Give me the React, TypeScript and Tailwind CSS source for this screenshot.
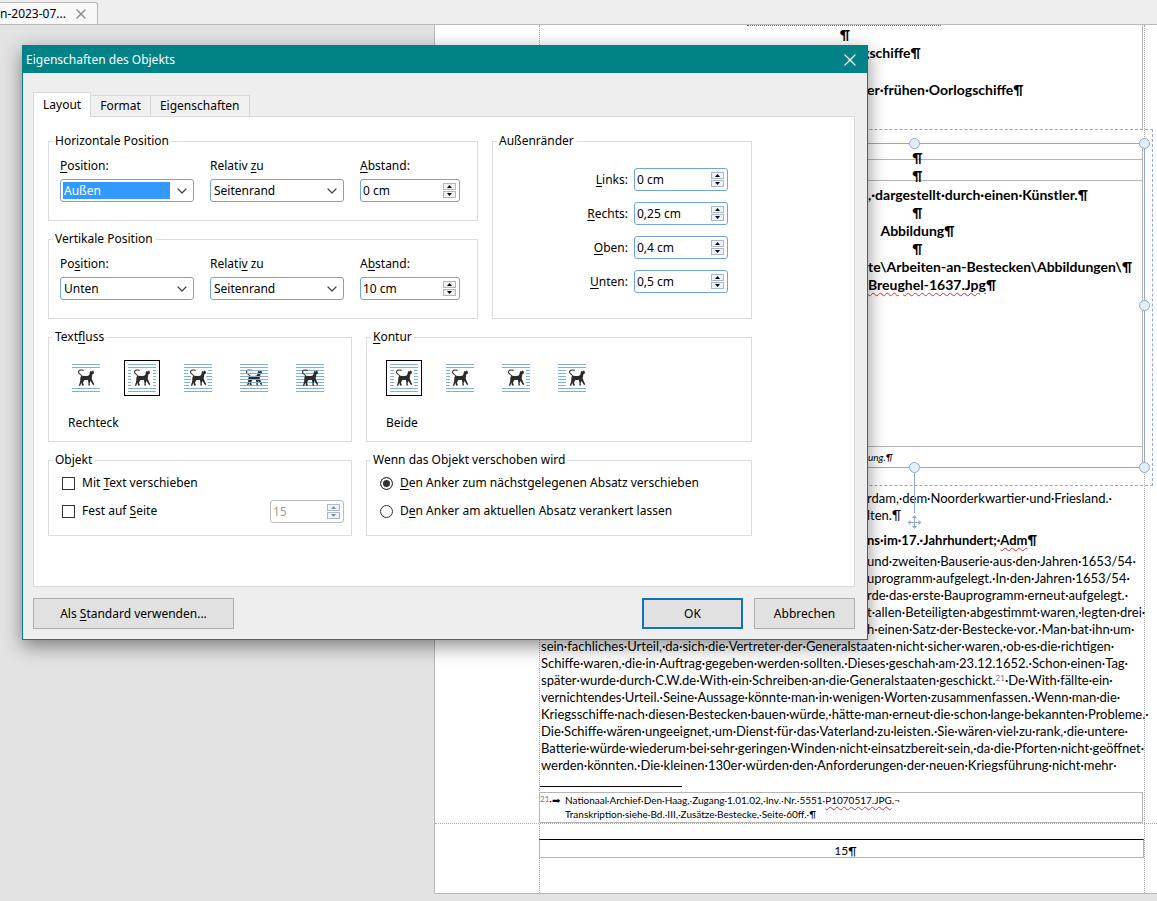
import React, { useState } from 'react';
import { ChevronDown, X } from 'lucide-react';

// "&" marks the letter that gets the keyboard underline
const Mnemonic = ({ text }: { text: string }) => {
  const at = text.indexOf('&');
  if (at < 0) return <>{text}</>;
  return (
    <span>
      {text.slice(0, at)}
      <span className="underline underline-offset-2">{text[at + 1]}</span>
      {text.slice(at + 2)}
    </span>
  );
};

interface GroupProps {
  title: string;
  className?: string;
  children: React.ReactNode;
}

const Group = ({ title, className = '', children }: GroupProps) => (
  <fieldset className={`min-w-0 border border-[#dcdcdc] ${className}`}>
    <legend className="ml-1 px-[2px] leading-[18px]">
      <Mnemonic text={title} />
    </legend>
    {children}
  </fieldset>
);

interface SelectBoxProps {
  id: string;
  label: string;
  options: string[];
  highlighted?: boolean;
}

const SelectBox = ({ id, label, options, highlighted }: SelectBoxProps) => (
  <div className="flex w-[134px] flex-col gap-1">
    <label htmlFor={id} className="leading-[18px]">
      <Mnemonic text={label} />
    </label>
    <div className="flex h-[23px] items-center rounded-[3px] border border-[#6ea6dc] bg-white p-[2px]">
      <select
        id={id}
        className={`h-[17px] min-w-0 flex-1 appearance-none pl-px leading-[17px] outline-none ${
          highlighted ? 'bg-[#3399ff] text-white' : 'bg-white text-black'
        }`}
      >
        {options.map((o) => (
          <option key={o}>{o}</option>
        ))}
      </select>
      <ChevronDown className="mr-px ml-1 size-4 shrink-0 text-[#444]" strokeWidth={1.8} />
    </div>
  </div>
);

interface SpinBoxProps {
  id: string;
  value: string;
  className: string;
  disabled?: boolean;
  ariaLabel?: string;
}

const SpinBox = ({ id, value, className, disabled, ariaLabel }: SpinBoxProps) => {
  const [text, setText] = useState(value);
  const border = disabled ? 'border-[#bcbcbc]' : 'border-[#6ea6dc]';
  const arrow = disabled ? 'fill-[#8a8a8a]' : 'fill-black';
  return (
    <div className={`flex h-[23px] items-center rounded-[3px] border bg-white pr-[3px] pl-[2px] ${border} ${className}`}>
      <input
        id={id}
        type="text"
        aria-label={ariaLabel}
        value={text}
        disabled={disabled}
        onChange={(e) => setText(e.target.value)}
        className="h-[19px] min-w-0 flex-1 bg-transparent outline-none disabled:text-[#a0a0a0]"
      />
      <div className="flex shrink-0 flex-col gap-px">
        <button type="button" disabled={disabled} aria-label="Mehr" className="flex h-[7px] w-[13px] items-center justify-center border border-[#a9b6d0] bg-[#f1f3f8]">
          <svg viewBox="0 0 5 3" className={`h-[3px] w-[5px] ${arrow}`}><path d="M2.5 0 5 3H0Z" /></svg>
        </button>
        <button type="button" disabled={disabled} aria-label="Weniger" className="flex h-[7px] w-[13px] items-center justify-center border border-[#a9b6d0] bg-[#f1f3f8]">
          <svg viewBox="0 0 5 3" className={`h-[3px] w-[5px] ${arrow}`}><path d="M2.5 3 5 0H0Z" /></svg>
        </button>
      </div>
    </div>
  );
};

type Stub = [number, number];

interface WrapIconProps {
  left?: Stub[];
  right?: Stub[];
  full?: boolean;
  through?: boolean;
  shift?: number;
}

const ROWS = [6.5, 9.5, 12.5, 15.5, 18.5, 21.5];

const Cat = ({ shift = 0 }: { shift?: number }) => (
  <g transform={`translate(${shift} 0)`}>
    <path d="M11.4 6.2C8.4 5.4 6 6.6 6.6 8.6 7 10 9.4 10.4 10 12.6" fill="none" stroke="#2b2b2b" strokeWidth="1.1" strokeLinecap="round" />
    <path
      d="M9.2 12C11 11.4 13.5 12.6 16 11.8 17.4 11.2 17.8 9.4 17.8 8L18.4 7 19.2 7.4 20.4 7.1 20.9 6 21.5 7.2 22 9 21.2 10 20.2 10.4C20.2 12 20 13.2 19.6 14.2L20.8 17.2 22.2 20.2 21.8 21 20.6 20.6 18.6 17 17.6 19 18 21.6 16.4 21.6 16.4 18.6 15.8 15.8C14.4 16.1 13 16 12.2 16.2L11 18.4 11.8 21 11.2 21.8 10 21.4 9.4 18.8 8.6 20.4 8.4 21.8 6.8 21.8 7.2 20.4 8.2 17.2C8.4 15 8 13.2 9.2 12Z"
      fill="#2b2b2b"
    />
  </g>
);

const WrapIcon = ({ left, right, full, through, shift }: WrapIconProps) => {
  const lines = (
    <g stroke="#7fb0d8" strokeWidth="1">
      {full && ROWS.map((y) => <path key={y} d={`M0 ${y}H28`} />)}
      {left?.map(([a, b], i) => <path key={`l${i}`} d={`M${a} ${ROWS[i]}H${b}`} />)}
      {right?.map(([a, b], i) => <path key={`r${i}`} d={`M${a} ${ROWS[i]}H${b}`} />)}
    </g>
  );
  return (
    <svg viewBox="0 0 28 28" className="size-7">
      <path d="M0 .5H28M0 3.5H28M0 24.5H28M0 27.5H28" stroke="#7fb0d8" strokeWidth="1" />
      {!through && lines}
      <Cat shift={shift} />
      {through && lines}
    </svg>
  );
};

const same = (a: number, b: number): Stub[] => ROWS.map(() => [a, b] as Stub);

const TEXT_FLOW: (WrapIconProps & { name: string })[] = [
  { name: 'Oben und unten' },
  { name: 'Rechteck', left: same(0, 3), right: same(25, 28) },
  {
    name: 'Kontur',
    left: [[0, 4], [0, 4], [0, 7], [0, 7], [0, 6], [0, 5]],
    right: [[24, 28], [23, 28], [22, 28], [23, 28], [24, 28], [24, 28]],
  },
  { name: 'Durchlauf', full: true, through: true },
  { name: 'Hintergrund', full: true },
];

const CONTOUR: (WrapIconProps & { name: string })[] = [
  { name: 'Beide', left: same(0, 4), right: same(24, 28) },
  { name: 'Links', left: same(0, 4) },
  { name: 'Rechts', right: same(24, 28) },
  { name: 'Größte Seite', left: same(0, 8), shift: 5 },
];

interface IconPickerProps {
  items: (WrapIconProps & { name: string })[];
  initial: number;
}

const IconPicker = ({ items, initial }: IconPickerProps) => {
  const [active, setActive] = useState(initial);
  return (
    <div className="pt-[14px] pb-[9px] pl-[19px]">
      <div className="flex gap-5">
        {items.map(({ name, ...icon }, i) => (
          <button
            key={name}
            type="button"
            aria-label={name}
            aria-pressed={i === active}
            onClick={() => setActive(i)}
            className={`flex size-9 items-center justify-center border ${i === active ? 'border-black' : 'border-transparent'}`}
          >
            <WrapIcon {...icon} />
          </button>
        ))}
      </div>
      <p className="mt-[18px] leading-[18px]">{items[active].name}</p>
    </div>
  );
};

const MARGINS = [
  { id: 'links', label: '&Links:', value: '0 cm' },
  { id: 'rechts', label: '&Rechts:', value: '0,25 cm' },
  { id: 'oben', label: '&Oben:', value: '0,4 cm' },
  { id: 'unten', label: '&Unten:', value: '0,5 cm' },
];

const LayoutPanel = () => (
  <div className="flex w-[704px] flex-col gap-[9px]">
    <div className="flex gap-[14px]">
      <div className="flex flex-1 flex-col gap-[9px]">
        <Group title="Horizontale Position">
          <div className="flex gap-4 pt-[7px] pb-[18px] pl-[11px]">
            <SelectBox id="h-pos" label="&Position:" options={['Außen', 'Innen', 'Links', 'Rechts']} highlighted />
            <SelectBox id="h-rel" label="Relativ &zu" options={['Seitenrand', 'Seite', 'Absatz']} />
            <div className="flex flex-col gap-1">
              <label htmlFor="h-dist" className="leading-[18px]"><Mnemonic text="&Abstand:" /></label>
              <SpinBox id="h-dist" value="0 cm" className="w-[100px]" />
            </div>
          </div>
        </Group>
        <Group title="Vertikale Position">
          <div className="flex gap-4 pt-[7px] pb-[18px] pl-[11px]">
            <SelectBox id="v-pos" label="Po&sition:" options={['Unten', 'Oben', 'Mitte']} />
            <SelectBox id="v-rel" label="Relati&v zu" options={['Seitenrand', 'Seite', 'Absatz']} />
            <div className="flex flex-col gap-1">
              <label htmlFor="v-dist" className="leading-[18px]"><Mnemonic text="A&bstand:" /></label>
              <SpinBox id="v-dist" value="10 cm" className="w-[100px]" />
            </div>
          </div>
        </Group>
      </div>
      <Group title="Außenränder" className="w-[260px]">
        <div className="flex flex-col items-end gap-[11px] pt-[18px] pr-[23px]">
          {MARGINS.map((m) => (
            <div key={m.id} className="flex items-center gap-[6px]">
              <label htmlFor={m.id}><Mnemonic text={m.label} /></label>
              <SpinBox id={m.id} value={m.value} className="w-[94px]" />
            </div>
          ))}
        </div>
      </Group>
    </div>

    <div className="flex gap-[14px]">
      <Group title="Text&fluss" className="w-[304px]">
        <IconPicker items={TEXT_FLOW} initial={1} />
      </Group>
      <Group title="&Kontur" className="flex-1">
        <IconPicker items={CONTOUR} initial={0} />
      </Group>
    </div>

    <div className="flex gap-[14px]">
      <Group title="Objekt" className="w-[304px]">
        <div className="pr-[7px] pb-[10px] pl-[13px]">
          <label className="flex h-7 items-center gap-[7px]">
            <input type="checkbox" className="size-[13px] appearance-none border border-[#333] bg-white checked:bg-[#333]" />
            <Mnemonic text="Mit &Text verschieben" />
          </label>
          <div className="flex h-7 items-center justify-between">
            <label className="flex items-center gap-[7px]">
              <input type="checkbox" className="size-[13px] appearance-none border border-[#333] bg-white checked:bg-[#333]" />
              <Mnemonic text="Fest auf &Seite" />
            </label>
            <SpinBox id="page" value="15" ariaLabel="Seite" className="w-[74px]" disabled />
          </div>
        </div>
      </Group>
      <Group title="Wenn das Objekt verschoben wird" className="flex-1">
        <div className="pb-[10px] pl-[13px]">
          {['&Den Anker zum nächstgelegenen Absatz verschieben', 'D&en Anker am aktuellen Absatz verankert lassen'].map((text, i) => (
            <label key={text} className="flex h-7 items-center gap-[7px]">
              <input
                type="radio"
                name="anchor"
                defaultChecked={i === 0}
                className="size-[13px] appearance-none rounded-full border border-[#333] bg-white checked:bg-[#333] checked:shadow-[inset_0_0_0_2px_white]"
              />
              <Mnemonic text={text} />
            </label>
          ))}
        </div>
      </Group>
    </div>
  </div>
);

const PropertiesDialog = () => (
  <section
    role="dialog"
    aria-label="Eigenschaften des Objekts"
    className="absolute top-[45px] left-[22px] w-[846px] border border-[#008287] bg-[#eeeeee] font-['Noto_Sans',sans-serif] text-[12px] text-black shadow-[0_6px_18px_rgba(0,0,0,0.45)]"
  >
    <header className="flex h-[27px] items-center justify-between bg-[#008287] pr-[7px] pl-[3px] text-white">
      <h1>Eigenschaften des Objekts</h1>
      <button type="button" aria-label="Schließen">
        <X className="size-5" strokeWidth={1.5} />
      </button>
    </header>
    <div className="pt-[19px] pr-3 pb-[10px] pl-[10px]">
      <div role="tablist" className="flex items-end">
        <button type="button" role="tab" aria-selected="true" className="-mb-px h-[25px] border border-b-0 border-[#d9d9d9] bg-white px-[9px]">Layout</button>
        <button type="button" role="tab" aria-selected="false" className="h-[21px] border-t border-r border-[#d9d9d9] bg-[#f0f0f0] px-[9px]">Format</button>
        <button type="button" role="tab" aria-selected="false" className="h-[21px] border-t border-r border-[#d9d9d9] bg-[#f0f0f0] px-[9px]">Eigenschaften</button>
      </div>
      <div role="tabpanel" className="border border-[#d9d9d9] bg-white pt-[15px] pb-[50px] pl-[14px]">
        <LayoutPanel />
      </div>
      <footer className="mt-[11px] flex gap-[11px]">
        <button type="button" className="mr-auto h-[31px] w-[201px] border border-[#adadad] bg-[#e1e1e1]"><Mnemonic text="Als &Standard verwenden..." /></button>
        <button type="button" className="h-[31px] w-[101px] border-2 border-[#1273bd] bg-[#e1e1e1]">OK</button>
        <button type="button" className="h-[31px] w-[101px] border border-[#adadad] bg-[#e1e1e1]">Abbrechen</button>
      </footer>
    </div>
  </section>
);

const Handle = ({ className }: { className: string }) => (
  <span className={`absolute size-[11px] rounded-full border border-[#8fa9d6] bg-[#e3effc] ${className}`} />
);

const Misspelled = ({ children }: { children: React.ReactNode }) => (
  <span className="underline decoration-[#d03040] decoration-wavy decoration-1 underline-offset-2">{children}</span>
);

// spaces are shown as middle dots, as with formatting marks switched on
const dots = (s: string) => s.replace(/ /g, '·');

const COVERED_LINES = [
  'und zweiten Bauserie aus den Jahren 1653/54 ',
  'uprogramm aufgelegt. In den Jahren 1653/54 ',
  'rde das erste Bauprogramm erneut aufgelegt. ',
  't allen Beteiligten abgestimmt waren, legten drei ',
  'h einen Satz der Bestecke vor. Man bat ihn um ',
];

const LINES = [
  'sein fachliches Urteil, da sich die Vertreter der Generalstaaten nicht sicher waren, ob es die richtigen ',
  'Schiffe waren, die in Auftrag gegeben werden sollten. Dieses geschah am 23.12.1652. Schon einen Tag ',
  'später wurde durch C.W.de With ein Schreiben an die Generalstaaten geschickt.^21^ De With fällte ein ',
  'vernichtendes Urteil. Seine Aussage könnte man in wenigen Worten zusammenfassen. Wenn man die ',
  'Kriegsschiffe nach diesen Bestecken bauen würde, hätte man erneut die schon lange bekannten Probleme. ',
  'Die Schiffe wären ungeeignet, um Dienst für das Vaterland zu leisten. Sie wären viel zu rank, die untere ',
  'Batterie würde wiederum bei sehr geringen Winden nicht einsatzbereit sein, da die Pforten nicht geöffnet ',
  'werden könnten. Die kleinen 130er würden den Anforderungen der neuen Kriegsführung nicht mehr ',
];

const TextFrame = () => (
  <div className="-mr-[9px] ml-auto w-[479px] border border-dashed border-[#8fa9d6] pt-[13px] pr-[7px] pb-[17px] pl-[9px]">
    <div className="relative h-[325px] border border-[#8fa9d6] text-[14px] leading-[18px] font-bold">
      <div className="mr-px flex h-full flex-col border-r border-[#b5b5b5]">
        <div className="h-4 border-b border-[#b5b5b5] pt-[5px] pl-2 text-center">¶</div>
        <div className="h-[21px] border-b border-[#b5b5b5] pt-[7px] pl-2 text-center">¶</div>
        <div className="flex-1 pt-[5px]">
          <p className="pl-[183px]">,·dargestellt·durch·einen·Künstler.¶</p>
          <p className="pl-2 text-center">¶</p>
          <p className="pl-2 text-center">Abbildung¶</p>
          <p className="pl-2 text-center">¶</p>
          <p className="pl-[183px]">te\Arbeiten-an-Bestecken\Abbildungen\¶</p>
          <p className="pl-[183px]"><Misspelled>Breughel-1637.Jpg</Misspelled>¶</p>
        </div>
        <p className="h-[21px] border-t border-[#b5b5b5] pl-[183px] text-[10px] leading-[21px] font-normal italic">ung.¶</p>
      </div>
      <Handle className="-top-[6px] left-[224px]" />
      <Handle className="-top-[6px] -right-[6px]" />
      <Handle className="top-[156px] -right-[6px]" />
      <Handle className="-right-[6px] -bottom-[6px]" />
      <Handle className="-bottom-[6px] left-[224px]" />
      <svg viewBox="0 0 15 56" className="absolute top-[329px] left-[222px] h-14 w-[15px] fill-[#8fa9d6] stroke-[#8fa9d6]">
        <path d="M7.5 0V40" />
        <path d="M7.5 43V54M2 49.5H13" />
        <path d="M7.5 42 10 45H5ZM7.5 56 10 53H5ZM.5 49.5 3.5 47V52ZM14.5 49.5 11.5 47V52Z" stroke="none" />
      </svg>
    </div>
  </div>
);

const DocumentPage = () => (
  <article className="ml-[434px] flex-1 border-b border-l border-[#b9b9b9] bg-white font-[Lato,sans-serif] whitespace-nowrap text-black">
    <div className="grid grid-cols-[104px_minmax(0,1fr)_12px] border-b border-dotted border-[#a8a8a8]">
      <div />
      <div className="border-x border-dotted border-[#a8a8a8] text-[13px] leading-[17px]">
        <div className="mr-px h-[104px] border-r border-[#b5b5b5] text-[14px] leading-[18px] font-bold">
          <div className="ml-[207px] w-[194px] border-t border-dotted border-t-[#d04040]" />
          <p className="pl-2 text-center">¶</p>
          <p className="pl-[322px]">gschiffe¶</p>
          <p className="pt-[19px] pl-[327px]">er·frühen·Oorlogschiffe¶</p>
        </div>
        <TextFrame />
        <div className="pt-1 pl-[327px]">
          <p>rdam,·dem·Noorderkwartier·und·Friesland.·</p>
          <p>lten.¶</p>
          <h2 className="pt-2 pb-1 font-bold">ns·im·17.·Jahrhundert;·<Misspelled>Adm</Misspelled>¶</h2>
          {COVERED_LINES.map((line) => (
            <p key={line}>{dots(line)}</p>
          ))}
        </div>
        <div className="pl-px">
          {LINES.map((line) => {
            const [before, note, after] = line.split('^');
            return (
              <p key={line}>
                {dots(before)}
                {note && <span className="align-[4px] text-[8px] leading-none text-[#777]">{note}</span>}
                {after && dots(after)}
              </p>
            );
          })}
        </div>
        <div className="mt-3 h-px w-[142px] bg-black" />
        <div className="mt-[5px] mr-px -ml-px grid grid-cols-[25px_1fr] border border-[#b5b5b5] text-[10px] leading-[14px]">
          <span><span className="align-[2px] text-[8px] leading-none text-[#777]">21</span>·➡</span>
          <div>
            <p>Nationaal·Archief·Den·Haag,·Zugang·1.01.02,·Inv.·Nr.·5551·<Misspelled>P1070517.JPG</Misspelled>.¬</p>
            <p className="pb-px">Transkription·siehe·Bd.·III,·Zusätze·Bestecke,·Seite·60ff.·¶</p>
          </div>
        </div>
      </div>
      <div />
    </div>
    <div className="grid grid-cols-[104px_minmax(0,1fr)_12px]">
      <div />
      <div className="border-x border-dotted border-[#a8a8a8] pt-[15px] pb-[35px]">
        <p className="-ml-px h-[19px] border border-[#b5b5b5] border-t-black pl-2 text-center text-[12px] leading-[22px]">15¶</p>
      </div>
      <div />
    </div>
  </article>
);

const App = () => (
  <div className="relative flex min-h-screen flex-col overflow-hidden bg-[#e3e3e3]">
    <nav className="flex h-[25px] items-end border-b border-[#b9b9b9] bg-[#eeeeee] font-['Noto_Sans',sans-serif] text-[12px]">
      <div className="flex h-[22px] w-[98px] items-center justify-between rounded-tr-[3px] border-t border-r border-[#b9b9b9] bg-[#f8f8f8] pr-2">
        <span className="whitespace-nowrap">n-2023-07...</span>
        <button type="button" aria-label="Tab schließen">
          <X className="size-4 text-[#8a8a8a]" strokeWidth={2} />
        </button>
      </div>
    </nav>
    <main className="flex">
      <DocumentPage />
    </main>
    <PropertiesDialog />
  </div>
);

export default App;
